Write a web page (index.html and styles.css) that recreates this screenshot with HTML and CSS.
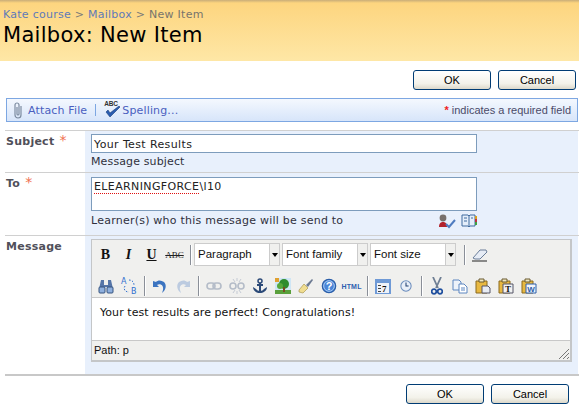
FILE: index.html
```html
<!DOCTYPE html>
<html lang="en">
<head>
<meta charset="utf-8">
<title>Mailbox: New Item</title>
<link rel="stylesheet" href="styles.css">
</head>
<body>
<header class="banner">
  <div class="crumbs"><a>Kate course</a> &gt; <a>Mailbox</a> &gt; <span class="here">New Item</span></div>
  <h1>Mailbox: New Item</h1>
</header>
<div class="actions top"><button class="btn">OK</button><button class="btn">Cancel</button></div>
<div class="toolbar">
  <svg class="clip" width="12" height="18" viewBox="0 0 12 18"><path d="M9 5v9a3 3 0 0 1-6 0V4a2 2 0 0 1 4 0v9a1 1 0 0 1-2 0V6" fill="none" stroke="#7c8ba0" stroke-width="1.2"/></svg>
  <a class="tool">Attach File</a>
  <span class="bar"></span>
  <span class="spell"><span class="abc">ABC</span><svg width="16" height="12" viewBox="0 0 16 12"><path d="M1 6l4 5L15 1l-1-1L5 7 3 4z" fill="#2a5db0" stroke="#1c3f7c" stroke-width=".6"/></svg></span>
  <a class="tool">Spelling...</a>
  <span class="note"><span class="req">*</span> indicates a required field</span>
</div>
<main class="form">
  <section class="row r-subject">
    <div class="label">Subject <span class="req">*</span></div>
    <div class="cell">
      <div class="input">Your Test Results</div>
      <div class="hint">Message subject</div>
    </div>
  </section>
  <section class="row r-to">
    <div class="label">To <span class="req">*</span></div>
    <div class="cell">
      <div class="input tall"><span class="squiggle">ELEARNINGFORCE</span>\l10</div>
      <div class="hintrow">
        <div class="hint wide">Learner(s) who this message will be send to</div>
        <div class="people">
          <svg width="18" height="16" viewBox="0 0 18 16"><circle cx="5" cy="5" r="3.4" fill="#77706c"/><path d="M1 14c0-4 2-5 4-5s4 1 4 5z" fill="#b3222c"/><path d="M8 11l3 3 6-7" fill="none" stroke="#4f7cc0" stroke-width="2"/></svg>
          <svg width="16" height="14" viewBox="0 0 16 14"><path d="M1 1h6l1 1 1-1h5v11H9l-1 1-1-1H1z" fill="#e4eefa" stroke="#3e6a9e"/><path d="M8 2v10" stroke="#3e6a9e"/><path d="M3 4h3M3 7h3M10 4h2" stroke="#3e6a9e"/><path d="M14 2h2v3h-2z" fill="#d8a020"/><path d="M14 5h2v3h-2z" fill="#c03040"/><path d="M14 8h2v3h-2z" fill="#40a040"/></svg>
        </div>
      </div>
    </div>
  </section>
  <section class="row r-msg">
    <div class="label">Message</div>
    <div class="cell">
      <div class="editor">
        <div class="etools">
          <div class="eline first">
            <span class="ib"><b class="g-b">B</b></span>
            <span class="ib"><b class="g-i">I</b></span>
            <span class="ib"><b class="g-u">U</b></span>
            <span class="ib"><span class="g-s">ABC</span></span>
            <span class="sep"></span>
            <span class="sel s1"><span class="val">Paragraph</span><span class="arr"></span></span>
            <span class="sel s2"><span class="val">Font family</span><span class="arr"></span></span>
            <span class="sel s2"><span class="val">Font size</span><span class="arr"></span></span>
            <span class="sep after"></span>
            <span class="ib"><svg width="16" height="14" viewBox="0 0 16 14"><path d="M1 10l7-8h6l1 2-7 7H3z" fill="#e6ecf5" stroke="#6a7d98"/><path d="M0 13h15" stroke="#222"/></svg></span>
          </div>
          <div class="eline second">
            <span class="ib"><svg width="16" height="15" viewBox="0 0 16 15"><path d="M3 1h3v5h4V1h3l2 9H9V8H7v2H1z" fill="#5575a8"/><rect x="1" y="8" width="6" height="6" rx="1" fill="#8fb0de" stroke="#35537f"/><rect x="9" y="8" width="6" height="6" rx="1" fill="#8fb0de" stroke="#35537f"/></svg></span>
            <span class="ib"><svg width="18" height="18" viewBox="0 0 18 18"><text x="1" y="7" class="rep">A</text><text x="11" y="17" class="rep">B</text><path d="M5 9c-2 3 0 6 4 6M9 3c3 0 5 2 5 5" fill="none" stroke="#2f6fd0" stroke-dasharray="1.5 1.5"/></svg></span>
            <span class="sep"></span>
            <span class="ib"><svg width="16" height="15" viewBox="0 0 16 15"><path d="M1 2v6h6L5 6c3-2 7 0 6 5l-1 3c4-3 5-8 2-11-3-2-6-2-8 0z" fill="#3c74c0"/></svg></span>
            <span class="ib"><svg width="16" height="15" viewBox="0 0 16 15"><path d="M15 2v6H9l2-2C8 4 4 6 5 11l1 3C2 11 1 6 4 3c3-2 6-2 8 0z" fill="#bccbe0"/></svg></span>
            <span class="sep"></span>
            <span class="ib"><svg width="16" height="10" viewBox="0 0 16 10"><rect x="1" y="2" width="8" height="6" rx="3" fill="none" stroke="#b4bcc8" stroke-width="1.6"/><rect x="7" y="2" width="8" height="6" rx="3" fill="none" stroke="#b4bcc8" stroke-width="1.6"/></svg></span>
            <span class="ib"><svg width="16" height="16" viewBox="0 0 16 16"><rect x="1" y="5" width="6" height="6" rx="3" fill="none" stroke="#b4bcc8" stroke-width="1.6"/><rect x="9" y="5" width="6" height="6" rx="3" fill="none" stroke="#b4bcc8" stroke-width="1.6"/><path d="M8 0v3M4 1l2 3M12 1l-2 3M8 13v3M4 15l2-3M12 15l-2-3" stroke="#c4cad4"/></svg></span>
            <span class="ib"><svg width="16" height="16" viewBox="0 0 16 16"><circle cx="8" cy="3" r="2" fill="none" stroke="#2c4a78" stroke-width="1.5"/><path d="M8 5v10M5 7h6" stroke="#2c4a78" stroke-width="2"/><path d="M1 9c0 4 4 6 7 6s7-2 7-6l-3 2c-1 1-2 2-4 2s-3-1-4-2z" fill="#2c4a78"/></svg></span>
            <span class="ib"><svg width="16" height="16" viewBox="0 0 16 16"><rect width="16" height="16" fill="#cfe6f5"/><path d="M0 12h16v4H0z" fill="#5aa03c"/><circle cx="9" cy="6" r="5" fill="#2e8c2e"/><circle cx="5" cy="8" r="3" fill="#56a83a"/><path d="M8 9h2v5H8z" fill="#7a4a20"/><path d="M0 0h4v4H0z" fill="#e0a030"/></svg></span>
            <span class="ib"><svg width="16" height="16" viewBox="0 0 16 16"><path d="M1 12l5-6 4 4-5 5-4-1z" fill="#f0dd90" stroke="#a08c40" stroke-width=".6"/><path d="M8 7l6-6 1 1-5 7z" fill="#6c7a92"/></svg></span>
            <span class="ib"><svg width="16" height="16" viewBox="0 0 16 16"><circle cx="8" cy="8" r="6.7" fill="#4a86d8" stroke="#2b5ea8" stroke-width="1.2"/><circle cx="8" cy="8" r="5.3" fill="none" stroke="#a9cbf2"/><text x="8" y="12" class="q">?</text></svg></span>
            <span class="ib"><span class="g-h">HTML</span></span>
            <span class="sep"></span>
            <span class="ib"><svg width="16" height="16" viewBox="0 0 16 16"><path d="M0 1h16v15H0z" fill="#6f9ad6"/><path d="M2 5h12v10H2z" fill="#eef2f8"/><path d="M3 7h3v1H3zm0 3h3v1H3zm0 3h3v1H3z" fill="#444"/><text x="7" y="14" class="cal">7</text></svg></span>
            <span class="ib"><svg width="12" height="12" viewBox="0 0 14 14"><circle cx="7" cy="7" r="6" fill="#e8eef8" stroke="#6a8cbc" stroke-width="1.2"/><path d="M7 3v4h3" fill="none" stroke="#1f3f70" stroke-width="1.2"/></svg></span>
            <span class="sep"></span>
            <span class="ib"><svg width="12" height="18" viewBox="0 0 12 18"><path d="M2 0l5 11M10 0L5 11" stroke="#6f7f94" stroke-width="1.8"/><circle cx="3" cy="14.5" r="2.3" fill="none" stroke="#1f4f9e" stroke-width="1.7"/><circle cx="9" cy="14.5" r="2.3" fill="none" stroke="#1f4f9e" stroke-width="1.7"/></svg></span>
            <span class="ib"><svg width="16" height="15" viewBox="0 0 16 15"><path d="M1 1h6l2 2v8H1z" fill="#eef3fa" stroke="#5c86c0"/><path d="M7 5h5l3 3v6H7z" fill="#fff" stroke="#5c86c0"/><path d="M9 9h4M9 11h4" stroke="#5c86c0"/></svg></span>
            <span class="ib"><svg width="16" height="16" viewBox="0 0 16 16"><path d="M1 3h11v12H1z" fill="#e8b840" stroke="#8a6a20"/><path d="M4 1h5v3H4z" fill="#f0e8c0" stroke="#6a5a30"/><path d="M7 8h6l2 2v5H7z" fill="#e8ecf2" stroke="#556"/></svg></span>
            <span class="ib"><svg width="16" height="16" viewBox="0 0 16 16"><path d="M1 3h11v12H1z" fill="#e8b840" stroke="#8a6a20"/><path d="M4 1h5v3H4z" fill="#f0e8c0" stroke="#6a5a30"/><path d="M5 6h10v9H5z" fill="#f2f2f2" stroke="#556"/><text x="10" y="14" class="pt">T</text></svg></span>
            <span class="ib"><svg width="16" height="16" viewBox="0 0 16 16"><path d="M1 3h11v12H1z" fill="#e8b840" stroke="#8a6a20"/><path d="M4 1h5v3H4z" fill="#f0e8c0" stroke="#6a5a30"/><path d="M5 6h10v9H5z" fill="#f2f6fc" stroke="#2f5fa8"/><text x="10" y="14" class="pw">W</text></svg></span>
          </div>
        </div>
        <div class="content">Your test results are perfect! Congratulations!</div>
        <div class="status">Path: p<svg class="grip" width="12" height="12" viewBox="0 0 12 12"><path d="M11 1L1 11M11 5l-6 6M11 9l-2 2" stroke="#777"/></svg></div>
      </div>
    </div>
  </section>
</main>
<div class="actions bottom"><button class="btn">OK</button><button class="btn">Cancel</button></div>
</body>
</html>
```
FILE: styles.css
```css
* { box-sizing: border-box; }
html, body { margin: 0; padding: 0; }
body { width: 579px; height: 410px; overflow: hidden; background: #fff; font-family: "DejaVu Sans", sans-serif; font-size: 11px; color: #222; }
.banner { height: 61px; padding: 7px 4px 0 3px; background: linear-gradient(#c9ad78 0, #fdd57f 3px, #fee7a6 100%); }
.crumbs { font-size: 11px; line-height: 15px; color: #7a7a78; letter-spacing: .26px; }
.crumbs a { color: #5f7ab8; }
.here { color: #77746c; }
h1 { margin: 0; font: 400 21px/26px "DejaVu Sans", sans-serif; letter-spacing: .3px; color: #000; }
.actions { display: flex; gap: 7px; justify-content: flex-end; }
.actions.top { margin-top: 9px; padding-right: 3px; }
.actions.bottom { margin-top: 8px; padding-right: 10px; }
.btn { width: 78px; height: 20px; padding: 0; border: 1px solid #003c74; border-radius: 3px; background: linear-gradient(#fff, #f3f2ea 70%, #dcd8ca); font: 11px "Liberation Sans", sans-serif; color: #000; }
.toolbar { display: flex; align-items: center; height: 24px; margin: 8px 1px 0 6px; padding: 0 6px 0 5px; border: 1px solid #7da7e2; background: linear-gradient(#f4f8fe, #d7e5fa); }
.clip { margin-right: 4px; }
.tool { color: #4a5fc0; letter-spacing: .15px; }
.bar { width: 1px; height: 12px; margin: 0 8px; background: #7da7e2; }
.spell { position: relative; display: block; width: 18px; height: 16px; margin-right: 0; }
.spell svg { position: absolute; left: 1px; top: 4px; }
.abc { position: absolute; left: 0; top: -2px; font: 700 6.5px "Liberation Sans", sans-serif; color: #333; letter-spacing: -.2px; }
.note { margin-left: auto; font: 11px "Liberation Sans", sans-serif; color: #4a4a68; }
.req { color: #f02020; font-weight: 700; }
.form { margin-top: 8px; border-bottom: 2px solid #c8c8c8; margin-left: 5px; margin-right: 0; }
.row { display: flex; border-top: 1px solid #d0d0d0; }
.r-subject { height: 42px; }
.r-to { height: 63px; }
.r-msg { height: 139px; }
.label { width: 80px; padding: 3px 0 0 1px; font-weight: 700; line-height: 16px; letter-spacing: .25px; color: #50505a; flex: none; }
.label .req { margin-left: 1px; font-size: 14px; line-height: 10px; color: #f07050; font-weight: 400; }
.cell { flex: 1; padding: 3px 6px 0 6px; background: #e8f0fc; margin-right: 1px; }
.input { width: 386px; height: 19px; padding: 1px 2px 0; line-height: 18px; letter-spacing: .38px; background: #fff; border: 1px solid #7d9cbc; color: #222; }
.tall { height: 34px; margin-top: 1px; line-height: 16px; }
.squiggle { border-bottom: 1px dotted #e01010; }
.hint { line-height: 15px; padding-top: 1px; letter-spacing: .13px; color: #30303c; }
.hint.wide { letter-spacing: .23px; padding-top: 2px; }
.hintrow { display: flex; justify-content: space-between; width: 386px; align-items: flex-start; }
.people { display: flex; gap: 5px; align-items: center; padding-top: 2px; margin-right: 0; margin-left: -2px; }
.editor { width: 481px; height: 123px; margin-top: 0; border: 2px solid #c4c6c8; border-width: 1px 2px 2px 1px; background: #f0f0ee; display: flex; flex-direction: column; }
.etools { height: 58px; border-bottom: 1px solid #c8c8c8; padding-left: 0; }
.eline { display: flex; align-items: center; }
.first { height: 26px; padding-top: 3px; }
.second { height: 31px; padding-top: 9px; }
.ib { flex: none; display: flex; width: 23px; height: 20px; align-items: center; justify-content: center; }
.first .ib:first-child, .second .ib:first-child { margin-left: 2px; }
.sep { flex: none; width: 2px; height: 20px; margin: 0 2px 0 4px; background: linear-gradient(90deg, #8a8f98 50%, #fff 50%); }
.sep.after { margin: 0 2px 0 6px; }
.g-b, .g-i, .g-u { font: 700 14px "Liberation Serif", serif; color: #111; }
.g-i { font-style: italic; }
.g-u { text-decoration: underline; }
.g-s { font: 9px "Liberation Serif", serif; text-decoration: line-through; color: #222; }
.g-h { font: 700 7px "Liberation Sans", sans-serif; color: #2f5fb0; letter-spacing: .2px; }
.sel { flex: none; display: flex; align-items: stretch; height: 23px; margin-right: 2px; background: #fff; border: 1px solid #ccc; }
.s1 { width: 86px; }
.s2 { width: 86px; }
.val { flex: 1; padding-left: 3px; font: 11.5px/21px "Liberation Sans", sans-serif; color: #111; }
.arr { position: relative; width: 10px; background: #f0f0ee; border-left: 1px solid #ccc; }
.arr::after { content: ""; position: absolute; left: 2px; top: 9px; border: 3px solid transparent; border-top: 4px solid #000; border-bottom: 0; }
.content { height: 42px; padding: 8px 8px 0; background: #fff; font-size: 11px; line-height: 14px; letter-spacing: .06px; color: #111; }
.status { position: relative; flex: 1; border-top: 1px solid #c8c8c8; padding-left: 2px; font: 11px/19px "Liberation Sans", sans-serif; color: #111; }
.grip { position: absolute; right: 0; bottom: 0; }
.rep { font: 8px "DejaVu Sans", sans-serif; fill: #2f6fd0; }
.q { font: 700 11px "Liberation Sans", sans-serif; fill: #fff; text-anchor: middle; }
.cal { font: 700 9px "Liberation Serif", serif; fill: #111; }
.pt { font: 700 9px "Liberation Serif", serif; fill: #111; text-anchor: middle; }
.pw { font: 700 8px "Liberation Sans", sans-serif; fill: #2f5fa8; text-anchor: middle; }
```
